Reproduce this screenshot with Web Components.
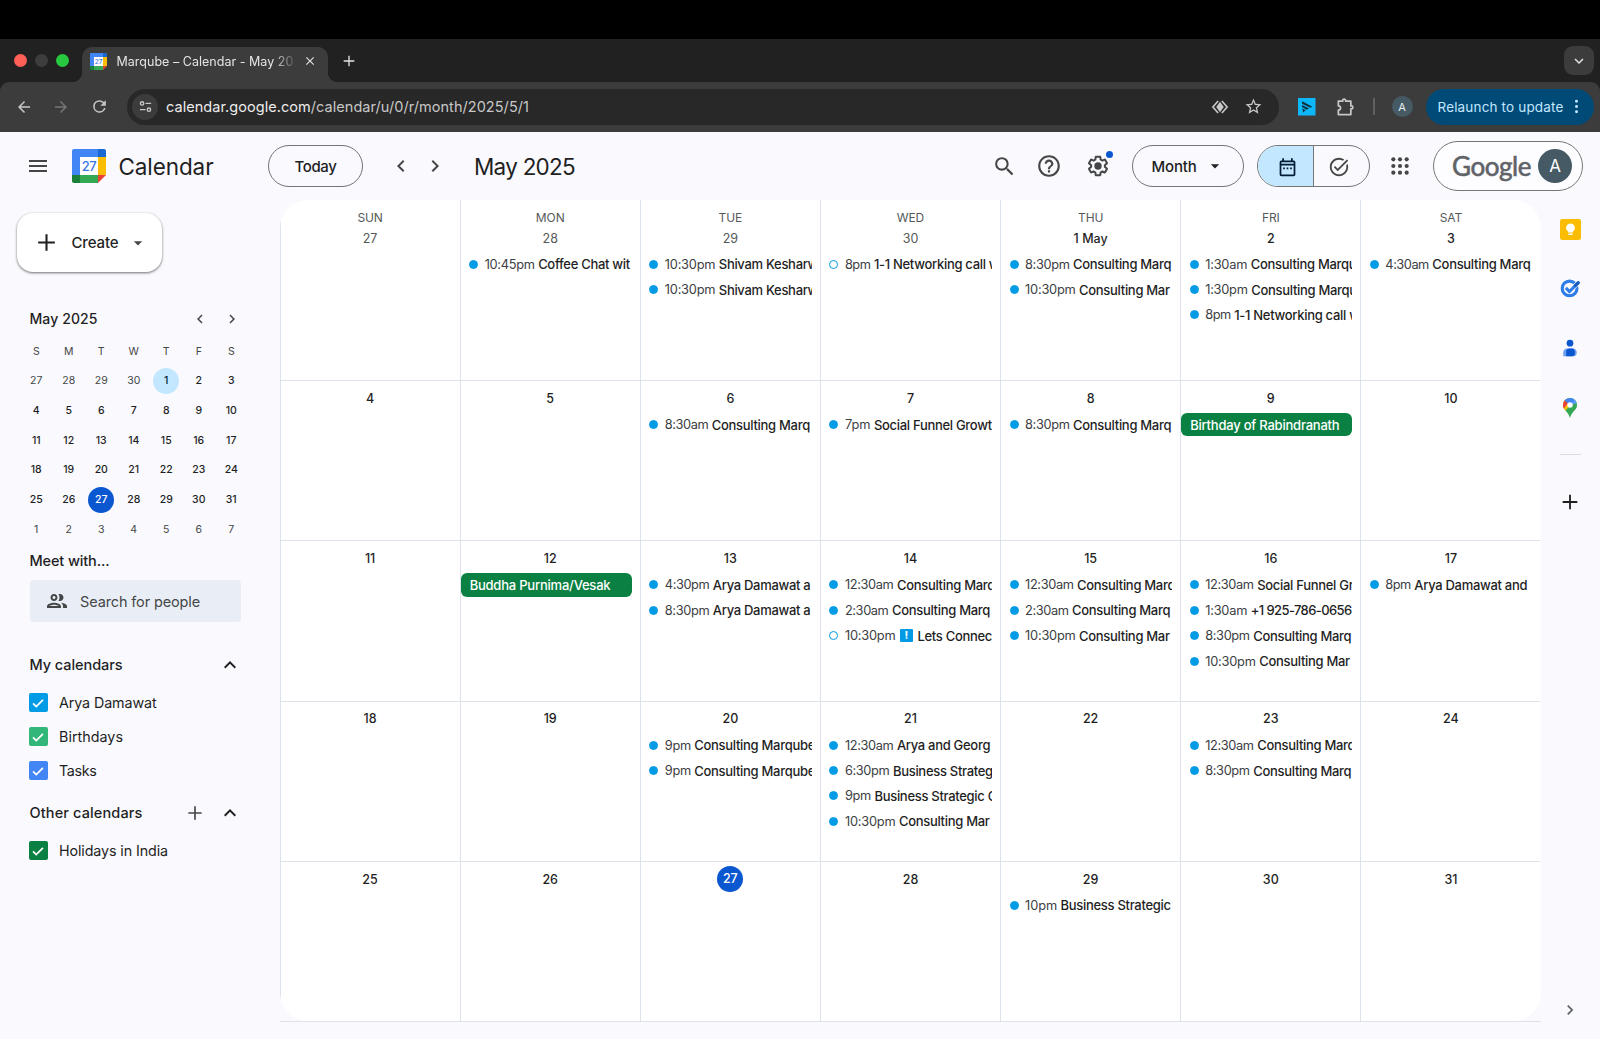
<!DOCTYPE html>
<html lang="en">
<head>
<meta charset="utf-8">
<title>Marqube – Calendar - May 2025</title>
<style>
   body {
      margin: 0;
      width: 1600px;
      height: 1039px;
      overflow: hidden;

      font-family: Inter, Roboto, "Noto Sans", sans-serif;
      color: #1f1f1f;
      background: #f9f9fe;
   }
</style>
</head>
<body>
<cal-window></cal-window>

<script>
// Icon shapes, drawn in a 24 unit box
const ICONS = {
   menu: `<path d="M3 18h18v-2H3v2zm0-5h18v-2H3v2zm0-7v2h18V6H3z"/>`,
   search: `<path d="M15.5 14h-.79l-.28-.27A6.471 6.471 0 0 0 16 9.5 6.5 6.5 0 1 0 9.5 16c1.61 0 3.09-.59 4.23-1.57l.27.28v.79l5 4.99L20.49 19l-4.99-5zm-6 0C7.01 14 5 11.99 5 9.5S7.01 5 9.5 5 14 7.01 14 9.5 11.99 14 9.5 14z"/>`,
   help: `<path d="M11 18h2v-2h-2v2zm1-16C6.48 2 2 6.48 2 12s4.48 10 10 10 10-4.48 10-10S17.52 2 12 2zm0 18c-4.41 0-8-3.59-8-8s3.59-8 8-8 8 3.59 8 8-3.59 8-8 8zm0-14c-2.21 0-4 1.79-4 4h2c0-1.1.9-2 2-2s2 .9 2 2c0 2-3 1.75-3 5h2c0-2.25 3-2.5 3-5 0-2.21-1.79-4-4-4z"/>`,
   gear: `<path d="M13.85 22.25h-3.7c-.74 0-1.36-.54-1.45-1.27l-.27-1.89c-.27-.14-.53-.29-.79-.46l-1.8.72c-.7.26-1.47-.03-1.81-.65L2.2 15.53c-.35-.66-.2-1.44.36-1.88l1.53-1.19c-.01-.15-.02-.3-.02-.46 0-.15.01-.31.02-.46l-1.52-1.19c-.59-.45-.74-1.26-.37-1.88l1.85-3.19c.34-.62 1.11-.9 1.79-.63l1.81.73c.26-.17.52-.32.78-.46l.27-1.91c.09-.7.71-1.25 1.44-1.25h3.7c.74 0 1.36.54 1.45 1.27l.27 1.89c.27.14.53.29.79.46l1.8-.72c.71-.26 1.48.03 1.82.65l1.84 3.18c.36.66.2 1.44-.36 1.88l-1.52 1.19c.01.15.02.3.02.46s-.01.31-.02.46l1.52 1.19c.56.45.72 1.23.37 1.86l-1.86 3.22c-.34.62-1.11.9-1.8.63l-1.8-.72c-.26.17-.52.32-.78.46l-.27 1.91c-.1.68-.72 1.22-1.46 1.22zm-3.23-2h2.76l.37-2.55.53-.22c.44-.18.88-.44 1.34-.78l.45-.34 2.38.96 1.38-2.4-2.03-1.58.07-.56c.03-.26.06-.51.06-.78s-.03-.53-.06-.78l-.07-.56 2.03-1.58-1.39-2.4-2.39.96-.45-.35c-.42-.32-.87-.58-1.33-.77l-.52-.22-.37-2.55h-2.76l-.37 2.55-.53.21c-.44.19-.88.44-1.34.79l-.45.33-2.38-.95-1.39 2.39 2.03 1.58-.07.56a7 7 0 0 0-.06.79c0 .26.02.53.06.78l.07.56-2.03 1.58 1.38 2.4 2.39-.96.45.35c.43.33.86.58 1.33.77l.53.22.38 2.55z"/><circle cx="12" cy="12" r="3.7"/>`,
   left: `<path d="M15.41 7.41 14 6l-6 6 6 6 1.41-1.41L10.83 12z"/>`,
   right: `<path d="M8.59 16.59 10 18l6-6-6-6-1.41 1.41L13.17 12z"/>`,
   up: `<path d="m12 8-6 6 1.41 1.41L12 10.83l4.59 4.58L18 14z"/>`,
   down: `<path d="M16.59 8.59 12 13.17 7.41 8.59 6 10l6 6 6-6z"/>`,
   caret: `<path d="m7 10 5 5 5-5z"/>`,
   plus: `<path d="M20 13h-7v7h-2v-7H4v-2h7V4h2v7h7v2z"/>`,
   close: `<path d="M19 6.41 17.59 5 12 10.59 6.41 5 5 6.41 10.59 12 5 17.59 6.41 19 12 13.41 17.59 19 19 17.59 13.41 12z"/>`,
   back: `<path d="M20 11H7.83l5.59-5.59L12 4l-8 8 8 8 1.41-1.41L7.83 13H20v-2z"/>`,
   forward: `<path d="m12 4-1.41 1.41L16.17 11H4v2h12.17l-5.58 5.59L12 20l8-8z"/>`,
   reload: `<path d="M17.65 6.35A7.96 7.96 0 0 0 12 4a8 8 0 1 0 7.73 10h-2.08A6 6 0 1 1 12 6c1.66 0 3.14.69 4.22 1.78L13 11h7V4z"/>`,
   tune: `<g fill="none" stroke="currentColor" stroke-width="2.2"><circle cx="6.5" cy="7" r="2.7"/><path d="M12 7h9M3 17h9"/><circle cx="17.5" cy="17" r="2.7"/></g>`,
   lens: `<path d="m12 5 5 7-5 7-5-7z"/><path d="M9.5 4 2.500 12l7 8M14.500 4l7 8-7 8" fill="none" stroke="currentColor" stroke-width="2.2"/>`,
   star: `<path d="m22 9.24-7.19-.62L12 2 9.19 8.63 2 9.24l5.46 4.73L5.82 21 12 17.27 18.18 21l-1.63-7.03L22 9.24zM12 15.4l-3.76 2.27 1-4.28-3.32-2.88 4.38-.38L12 6.1l1.71 4.04 4.38.38-3.32 2.88 1 4.28L12 15.4z"/>`,
   puzzle: `<path d="M4 5h5.2v-.6a1.8 1.8 0 0 1 3.6 0V5H19v5.7h.6a1.8 1.8 0 0 1 0 3.6H19V21H4v-5.2a2.6 2.6 0 0 0 0-5.2z" fill="none" stroke="currentColor" stroke-width="2.1" stroke-linejoin="round"/>`,
   dots: `<circle cx="12" cy="4.5" r="2.1"/><circle cx="12" cy="12" r="2.1"/><circle cx="12" cy="19.5" r="2.1"/>`,
   day: `<path fill-rule="evenodd" d="M6 1.5h2V4h8V1.5h2V4h1a2 2 0 0 1 2 2v14a2 2 0 0 1-2 2H5a2 2 0 0 1-2-2V6a2 2 0 0 1 2-2h1zM5 9.8V20h14V9.8zM5 6v1.8h14V6z"/><path d="M7 12h2v2H7zm4 0h2v2h-2zm4 0h2v2h-2z"/>`,
   done: `<path d="M22 5.18 10.59 16.6l-4.24-4.24 1.41-1.41 2.83 2.83 10-10L22 5.18zM19.79 10.22c.13.57.21 1.17.21 1.78 0 4.42-3.58 8-8 8s-8-3.58-8-8 3.58-8 8-8c1.58 0 3.04.46 4.28 1.25l1.44-1.44A9.9 9.9 0 0 0 12 2C6.48 2 2 6.48 2 12s4.48 10 10 10 10-4.48 10-10c0-1.19-.22-2.33-.6-3.39l-1.61 1.61z"/>`,
   apps: [4, 12, 20].map(y => [4, 12, 20].map(x => `<circle cx="${x}" cy="${y}" r="2.5"/>`).join("")).join(""),
   people: `<path d="M9 13.75c-2.34 0-7 1.17-7 3.5V19h14v-1.75c0-2.33-4.66-3.5-7-3.5zM4.34 17c.84-.58 2.87-1.25 4.66-1.25s3.82.67 4.66 1.25H4.34zM9 12c1.93 0 3.5-1.57 3.5-3.5S10.93 5 9 5 5.5 6.57 5.5 8.5 7.07 12 9 12zm0-5c.83 0 1.5.67 1.5 1.5S9.83 10 9 10s-1.5-.67-1.5-1.5S8.17 7 9 7zm7.04 6.81c1.16.84 1.96 1.96 1.96 3.44V19h4v-1.75c0-2.02-3.5-3.17-5.96-3.44zM15 12c1.93 0 3.5-1.57 3.5-3.5S16.93 5 15 5c-.54 0-1.04.13-1.5.35.63.89 1 1.98 1 3.15s-.37 2.26-1 3.15c.46.22.96.35 1.5.35z"/>`,
   check: `<path d="m3.5 12.5 5.5 5.5L20.5 6.5" fill="none" stroke="currentColor" stroke-width="3"/>`,
   extension: `<path fill="#0cb8f8" d="M0 0h24v24H0z"/><path d="m6 4.500 13.500 7.500L17 13.500 5.500 8zM5.500 9.500l9.500 5-3 1.500-6.500-3.500zM6 14.500l4.500 2.300-3.500 3z" fill="#12303c"/>`,
   keep: `<rect width="24" height="24" rx="2.5" fill="#fbbc04"/><path d="M12 5a5 5 0 0 0-2.8 9.1V15.5h5.6v-1.4A5 5 0 0 0 12 5zM9.6 16.6h4.8v1.8H9.6z" fill="#fff"/>`,
   tasks: `<circle cx="11.5" cy="12.5" r="8.8" fill="none" stroke="#2f7de9" stroke-width="3.8"/><path d="m15.500 12 7-7" stroke="#f9f9fe" stroke-width="5.5"/><path d="m7 11.800 4.300 4.400L22 5.500" fill="none" stroke="#2f7de9" stroke-width="3.6"/><path d="m18.5 9 3.5-3.5" stroke="#185abc" stroke-width="3.8" stroke-linecap="round"/>`,
   contacts: `<circle cx="12" cy="5.5" r="4.5" fill="#0b57d0"/><path d="M3 23v-5a5.5 5.5 0 0 1 5.5-5.5h7A5.5 5.5 0 0 1 21 18a5 5 0 0 1-5 5z" fill="#6f9df0"/><path d="M7 23v-6a4.5 4.5 0 0 1 4.5-4.5h4.2q2.8 1 2.8 4.5v1.5A4.5 4.5 0 0 1 14 23z" fill="#0b57d0"/>`,
   maps: `<clipPath id="pin"><path d="M12 0a8.5 8.5 0 0 0-8.5 8.5c0 6 6.3 7.5 8.5 15.5 2.2-8 8.5-9.5 8.5-15.5A8.5 8.5 0 0 0 12 0z"/></clipPath><g clip-path="url(#pin)"><path fill="#34a853" d="M0 0h24v24H0z"/><path fill="#fbbc04" d="M0 8 6 16l11-13-8-3z"/><path fill="#ea4335" d="M0 0v12l4 1 8-9z"/><path fill="#4285f4" d="m5 2 7 7 7-7-7-4z"/><path fill="#5a9af8" d="m12 8 7-7 3 5z"/></g><circle cx="12" cy="8.3" r="3.3" fill="#fff"/>`,
};

// One icon, coloured by the text colour around it
class GIcon extends HTMLElement {
   connectedCallback() {
      const size = this.getAttribute("size") || 24;

      this.attachShadow({ mode: "open" }).innerHTML = `
         <style>
            :host {
               display: block;
               flex: none;
               width: ${size}px;
               height: ${size}px;
            }

            svg {
               display: block;
               overflow: visible;
            }
         </style>
         <svg width="${size}" height="${size}" viewBox="0 0 24 24" fill="currentColor">${ICONS[this.getAttribute("name")]}</svg>
      `;
   }
}

// Calendar logo with the day number on it
class CalLogo extends HTMLElement {
   connectedCallback() {
      const size = this.getAttribute("size");

      this.attachShadow({ mode: "open" }).innerHTML = `
         <style>
            :host {
               display: block;
               flex: none;
               height: ${size}px;
            }

            svg {
               display: block;
            }
         </style>
         <svg width="${size}" height="${size}" viewBox="0 0 34 34">
            <path fill="#4285f4" d="M2 0h24v8H8v18H0V2a2 2 0 0 1 2-2z"/>
            <path fill="#1967d2" d="M26 0h6a2 2 0 0 1 2 2v6h-8z"/>
            <path fill="#fbbc04" d="M26 8h8v18h-8z"/>
            <path fill="#34a853" d="M8 26h18v8H8z"/>
            <path fill="#188038" d="M0 26h8v8H2a2 2 0 0 1-2-2z"/>
            <path fill="#ea4335" d="M26 26h8l-8 8z"/>
            <path fill="#fff" d="M8 8h18v18H8z"/>
            <text x="17" y="21.8" text-anchor="middle" font-family="Inter" font-size="13" font-weight="500" letter-spacing="-.4" fill="#3b78e7">27</text>
         </svg>
      `;
   }
}

// Label that spreads its letters over the width in "w"
class FitText extends HTMLElement {
   connectedCallback() {
      this.attachShadow({ mode: "open" }).innerHTML =
         `<style>:host { display: inline-block; flex: none; white-space: nowrap; }</style><slot></slot>`;

      const width = this.getBoundingClientRect().width;
      const target = Number(this.getAttribute("w"));

      this.style.letterSpacing = (target - width) / this.textContent.length + "px";
   }
}

// Browser tabs and address bar
class BrowserChrome extends HTMLElement {
   connectedCallback() {
      this.attachShadow({ mode: "open" }).innerHTML = `
         <style>
            :host {
               display: block;
               padding-top: 39px;
               background: #000;
               color: #e3e3e3;
            }

            .strip, .bar, .tab, .url, .relaunch {
               display: flex;
               align-items: center;
               box-sizing: border-box;
            }

            .strip {
               height: 43px;
               padding: 0 6px 0 13.5px;
               background: #202120;
            }

            .light {
               width: 13px;
               height: 13px;
               margin-right: 8.3px;
               border-radius: 50%;
            }

            .tab {
               position: relative;
               align-self: flex-end;
               width: 245.5px;
               height: 35px;
               margin-left: 5px;
               padding: 0 11px 7px 8px;
               border-radius: 10px 10px 0 0;
               background: #3c3c3c;
               font-size: 12.5px;
            }

            .tab::before, .tab::after {
               content: "";
               position: absolute;
               bottom: 0;
               width: 10px;
               height: 10px;
            }

            .tab::before {
               right: 100%;
               background: radial-gradient(circle at 0 0, #0000 10px, #3c3c3c 10.5px);
            }

            .tab::after {
               left: 100%;
               background: radial-gradient(circle at 100% 0, #0000 10px, #3c3c3c 10.5px);
            }

            .tab fit-text {
               margin: 0 10px 0 9px;
               -webkit-mask-image: linear-gradient(90deg, #000 88%, #0003);
               mask-image: linear-gradient(90deg, #000 88%, #0003);
            }

            .drop {
               display: grid;
               place-items: center;
               width: 30px;
               height: 29px;
               margin-left: auto;
               border-radius: 9px;
               background: #3c3c3c;
            }

            .under {
               background: #202120;
            }

            .bar {
               height: 50px;
               padding: 0 6px 1px 14.5px;
               box-sizing: border-box;
               border-radius: 9px 9px 0 0;
               background: #3c3c3c;
               color: #c7c7c7;
            }

            .url {
               width: 1152px;
               height: 36px;
               margin: 0 19px 0 18.5px;
               padding: 0 16px 0 5px;
               border-radius: 18px;
               background: #282828;
               font-size: 14.5px;
            }

            .tune {
               display: grid;
               place-items: center;
               width: 26px;
               height: 26px;
               margin-right: 8px;
               border-radius: 50%;
               background: #3c3c3c;
            }

            b {
               font-weight: 400;
               color: #ececec;
            }

            .avatar {
               display: grid;
               place-items: center;
               width: 21px;
               height: 21px;
               margin: 0 13px 0 17px;
               border-radius: 50%;
               background: #455a64;
               color: #e8eef0;
               font-size: 11px;
            }

            .relaunch {
               width: 168px;
               height: 36px;
               padding-left: 12px;
               border-radius: 18px;
               background: #004a77;
               color: #c2e7ff;
               font-size: 13.5px;
            }
         </style>
         <div class="strip">
            <div class="light" style="background:#fe5f57"></div>
            <div class="light" style="background:#3d3d3d"></div>
            <div class="light" style="background:#28c840"></div>
            <div class="tab">
               <cal-logo size="17"></cal-logo>
               <fit-text w="177">Marqube – Calendar - May 20</fit-text>
               <g-icon name="close" size="14"></g-icon>
            </div>
            <g-icon name="plus" size="16" style="margin-left:13px"></g-icon>
            <div class="drop"><g-icon name="down" size="18"></g-icon></div>
         </div>
         <div class="under">
            <div class="bar">
               <g-icon name="back" size="18"></g-icon>
               <g-icon name="forward" size="18" style="margin-left:19.5px;color:#757575"></g-icon>
               <g-icon name="reload" size="19" style="margin-left:19.5px"></g-icon>
               <div class="url">
                  <div class="tune"><g-icon name="tune" size="15"></g-icon></div>
                  <fit-text w="363"><b>calendar.google.com</b>/calendar/u/0/r/month/2025/5/1</fit-text>
                  <g-icon name="lens" size="18" style="margin-left:auto"></g-icon>
                  <g-icon name="star" size="19" style="margin-left:15px"></g-icon>
               </div>
               <g-icon name="extension" size="17.5"></g-icon>
               <g-icon name="puzzle" size="20" style="margin-left:19.5px"></g-icon>
               <div style="width:2px;height:17px;margin-left:17.5px;background:#606060"></div>
               <div class="avatar">A</div>
               <div class="relaunch">
                  <fit-text w="126">Relaunch to update</fit-text>
                  <g-icon name="dots" size="17" style="margin-left:4px"></g-icon>
               </div>
            </div>
         </div>
      `;
   }
}

// Page header
class CalHeader extends HTMLElement {
   connectedCallback() {
      this.attachShadow({ mode: "open" }).innerHTML = `
         <style>
            :host {
               display: flex;
               align-items: center;
               box-sizing: border-box;
               height: 68px;
               padding: 0 17.5px 0 26px;
               color: #444746;
            }

            .pill {
               display: flex;
               align-items: center;
               justify-content: center;
               box-sizing: border-box;
               height: 42px;
               border: 1px solid #747775;
               border-radius: 21px;
               color: #1f1f1f;
               font-size: 15px;
               font-weight: 500;
            }

            .title {
               color: #1f1f1f;
               font-size: 22.5px;
            }

            .gear {
               position: relative;
               margin: 0 22px 0 24px;
            }

            .gear::after {
               content: "";
               position: absolute;
               top: -3px;
               right: -3px;
               width: 7px;
               height: 7px;
               border-radius: 50%;
               background: #0b57d0;
            }

            .views {
               display: grid;
               grid-template-columns: 56px 1fr;
               width: 113.5px;
               margin: 0 20px 0 12.5px;
               overflow: hidden;
               justify-content: stretch;
            }

            .views > div {
               display: grid;
               place-items: center;
               box-sizing: border-box;
               height: 42px;
               padding-right: 4px;
               color: #444746;
            }

            .views > .on {
               padding: 0 0 0 4px;
               border-right: 1px solid #747775;
               background: #c2e7ff;
               color: #001d35;
            }

            .account {
               width: 150px;
               height: 50px;
               margin-left: 22.5px;
               padding-left: 9px;
               border-radius: 25px;
               background: #fdfdff;
            }

            .brand {
               color: #5f6368;
               font-family: Lato, sans-serif;
               font-size: 26px;
               font-weight: 400;
               -webkit-text-stroke: .6px #5f6368;
            }

            .avatar {
               display: grid;
               place-items: center;
               width: 34px;
               height: 34px;
               margin-left: 7px;
               border-radius: 50%;
               background: #455a64;
               color: #fff;
               font-size: 17px;
               font-weight: 400;
            }
         </style>
         <g-icon name="menu"></g-icon>
         <cal-logo size="34" style="margin-left:22px"></cal-logo>
         <fit-text class="title" w="95" style="margin-left:12.5px">Calendar</fit-text>
         <div class="pill" style="width:95px;margin-left:54.5px"><fit-text w="42">Today</fit-text></div>
         <g-icon name="left" style="margin-left:26px"></g-icon>
         <g-icon name="right" style="margin-left:10px"></g-icon>
         <fit-text class="title" w="101" style="margin-left:27px">May 2025</fit-text>
         <g-icon name="search" size="25" style="margin-left:auto"></g-icon>
         <g-icon name="help" size="26" style="margin-left:19.5px"></g-icon>
         <div class="gear"><g-icon name="gear"></g-icon></div>
         <div class="pill" style="width:112px">
            <fit-text w="45">Month</fit-text>
            <g-icon name="caret" size="20" style="margin-left:8px"></g-icon>
         </div>
         <div class="pill views">
            <div class="on"><g-icon name="day" size="21"></g-icon></div>
            <div><g-icon name="done" size="22"></g-icon></div>
         </div>
         <g-icon name="apps" size="20"></g-icon>
         <div class="pill account">
            <fit-text class="brand" w="79">Google</fit-text>
            <div class="avatar">A</div>
         </div>
      `;
   }
}

// Small month in the side bar
class MiniMonth extends HTMLElement {
   connectedCallback() {
      const days = [];

      for (let i = 0; i < 42; i++) {
         const day = i < 4 ? 27 + i : i < 35 ? i - 3 : i - 34;
         const kind = i < 4 || i > 34 ? "out" : day == 1 ? "picked" : day == 27 ? "today" : "";

         days.push(`<span class="${kind}">${day}</span>`);
      }

      this.attachShadow({ mode: "open" }).innerHTML = `
         <style>
            :host {
               display: block;
               width: 228px;
            }

            header {
               display: flex;
               align-items: center;
               height: 24px;
               padding-left: 9.5px;
               color: #444746;
            }

            header fit-text {
               margin-right: auto;
               color: #1f1f1f;
               font-size: 14px;
               font-weight: 500;
            }

            .grid {
               display: grid;
               grid-template-columns: repeat(7, 32.5px);
               grid-auto-rows: 29.65px;
               place-items: center;
               margin-top: 6.3px;
               font-size: 10.5px;
               font-weight: 500;
            }

            .grid span {
               width: 26px;
               line-height: 26px;
               border-radius: 50%;
               text-align: center;
            }

            .grid i, .grid .out {
               color: #444746;
               font-style: normal;
               font-weight: 400;
            }

            .grid .picked {
               background: #c2e7ff;
               color: #001d35;
            }

            .grid .today {
               background: #0b57d0;
               color: #fff;
            }
         </style>
         <header>
            <fit-text w="68">May 2025</fit-text>
            <g-icon name="left" size="18"></g-icon>
            <g-icon name="right" size="18" style="margin:0 7px 0 14px"></g-icon>
         </header>
         <div class="grid">${[..."SMTWTFS"].map(d => `<i>${d}</i>`).join("")}${days.join("")}</div>
      `;
   }
}

// Checkbox row in a calendar list
class CalCheck extends HTMLElement {
   connectedCallback() {
      this.attachShadow({ mode: "open" }).innerHTML = `
         <style>
            :host {
               display: flex;
               align-items: center;
               gap: 11px;
               height: 34px;
               font-size: 14.3px;
            }

            .box {
               display: grid;
               place-items: center;
               width: 19.5px;
               height: 19px;
               border-radius: 2px;
               background: ${this.getAttribute("color")};
               color: #fff;
            }
         </style>
         <div class="box"><g-icon name="check" size="14"></g-icon></div>
         <fit-text w="${this.getAttribute("w")}">${this.getAttribute("label")}</fit-text>
      `;
   }
}

class CalSide extends HTMLElement {
   connectedCallback() {
      this.attachShadow({ mode: "open" }).innerHTML = `
         <style>
            :host {
               display: block;
               flex: none;
               box-sizing: border-box;
               width: 279.5px;
               padding: 13px 0 0 20px;
            }

            .create {
               display: flex;
               align-items: center;
               box-sizing: border-box;
               width: 145px;
               height: 59px;
               margin: 0 0 34.7px -3.5px;
               padding-left: 17.5px;
               border-radius: 16px;
               background: #fff;
               box-shadow: 0 1px 3px #0006, 0 1px 2px #0003;
               font-size: 15px;
               font-weight: 500;
            }

            .head {
               display: flex;
               align-items: center;
               height: 24px;
               width: 212px;
               margin-left: 9.5px;
               font-size: 14.5px;
               font-weight: 500;
            }

            .find {
               display: flex;
               align-items: center;
               box-sizing: border-box;
               width: 211px;
               height: 42px;
               margin: 7.5px 0 30.5px 9.5px;
               padding-left: 15px;
               border-radius: 4px;
               background: #e9eef6;
               color: #444746;
               font-size: 14.5px;
            }

            cal-check {
               margin-left: 8.5px;
            }
         </style>
         <div class="create">
            <g-icon name="plus" size="25"></g-icon>
            <fit-text w="47" style="margin-left:12.5px">Create</fit-text>
            <g-icon name="caret" size="20" style="margin-left:9px;color:#444746"></g-icon>
         </div>
         <mini-month></mini-month>
         <div class="head" style="margin-top:4.3px"><fit-text w="80">Meet with...</fit-text></div>
         <div class="find">
            <g-icon name="people"></g-icon>
            <fit-text w="120" style="margin-left:11.5px">Search for people</fit-text>
         </div>
         <div class="head">
            <fit-text w="93">My calendars</fit-text>
            <g-icon name="up" style="margin-left:auto"></g-icon>
         </div>
         <div style="height:9px"></div>
         <cal-check label="Arya Damawat" w="97.5" color="#039be5"></cal-check>
         <cal-check label="Birthdays" w="64" color="#33b679"></cal-check>
         <cal-check label="Tasks" w="37.5" color="#4285f4"></cal-check>
         <div class="head" style="margin-top:13px">
            <fit-text w="113">Other calendars</fit-text>
            <g-icon name="plus" size="20" style="margin:0 12.5px 0 auto;color:#444746"></g-icon>
            <g-icon name="up"></g-icon>
         </div>
         <div style="height:9px"></div>
         <cal-check label="Holidays in India" w="109" color="#0b8043"></cal-check>
      `;
   }
}

// Width of the time column, by its text
const TIMES = {
   "10:45pm": 50, "10:30pm": 50.5, "12:30am": 48.5, "8:30pm": 44.5, "4:30pm": 44.5, "6:30pm": 44.5,
   "8:30am": 43.5, "4:30am": 43.5, "2:30am": 43.5, "1:30am": 42, "1:30pm": 42.5,
   "8pm": 25.5, "7pm": 25.5, "9pm": 26, "10pm": 32,
};

// Timed event: a dot, the time and the title. "allday" makes it a bar.
class CalEvent extends HTMLElement {
   connectedCallback() {
      const time = this.getAttribute("time");

      this.attachShadow({ mode: "open" }).innerHTML = `
         <style>
            :host {
               display: flex;
               align-items: center;
               box-sizing: border-box;
               width: 171px;
               height: 23.4px;
               padding-left: 8.5px;
               overflow: hidden;
               font-size: 13px;
               white-space: nowrap;
            }

            :host([allday]) {
               padding-left: 9px;
               border-radius: 6px;
               background: #0b8043;
               color: #fff;
               font-weight: 500;
               letter-spacing: -.22px;
            }

            .dot {
               flex: none;
               box-sizing: border-box;
               width: 9px;
               height: 9px;
               margin-right: 6.5px;
               border: 1.3px solid #039be5;
               border-radius: 50%;
               background: #039be5;
            }

            :host([open]) .dot {
               background: #fff;
            }

            fit-text {
               color: #3c4043;
               font-size: 12.8px;
            }

            .title {
               margin-left: 3.5px;
               font-weight: 500;
               letter-spacing: -.3px;
            }

            .mark {
               flex: none;
               width: 13px;
               height: 13px;
               margin: 0 1px 0 4.5px;
               border-radius: 1px;
               background: #039be5;
               color: #fff;
               font-size: 11px;
               font-weight: 700;
               line-height: 13px;
               text-align: center;
            }
         </style>
         ${time ? `<div class="dot"></div><fit-text w="${TIMES[time]}">${time}</fit-text>` : ""}
         ${this.hasAttribute("mark") ? `<div class="mark">!</div>` : ""}
         ${time ? `<div class="title"><slot></slot></div>` : `<slot></slot>`}
      `;
   }
}

// "o" before a time marks an event that is not accepted yet
const EVENTS = {
   1: [["10:45pm", "Coffee Chat wit"]],
   2: [["10:30pm", "Shivam Kesharw"], ["10:30pm", "Shivam Kesharw"]],
   3: [["o8pm", "1-1 Networking call w"]],
   4: [["8:30pm", "Consulting Marq"], ["10:30pm", "Consulting Mar"]],
   5: [["1:30am", "Consulting Marqu"], ["1:30pm", "Consulting Marqu"], ["8pm", "1-1 Networking call w"]],
   6: [["4:30am", "Consulting Marq"]],
   9: [["8:30am", "Consulting Marq"]],
   10: [["7pm", "Social Funnel Growt"]],
   11: [["8:30pm", "Consulting Marq"]],
   12: [["", "Birthday of Rabindranath"]],
   15: [["", "Buddha Purnima/Vesak"]],
   16: [["4:30pm", "Arya Damawat a"], ["8:30pm", "Arya Damawat a"]],
   17: [["12:30am", "Consulting Marq"], ["2:30am", "Consulting Marq"], ["o10:30pm", "!Lets Connec"]],
   18: [["12:30am", "Consulting Marq"], ["2:30am", "Consulting Marq"], ["10:30pm", "Consulting Mar"]],
   19: [["12:30am", "Social Funnel Gr"], ["1:30am", "+1 925-786-0656"], ["8:30pm", "Consulting Marq"], ["10:30pm", "Consulting Mar"]],
   20: [["8pm", "Arya Damawat and"]],
   23: [["9pm", "Consulting Marqube"], ["9pm", "Consulting Marqube"]],
   24: [["12:30am", "Arya and Georg"], ["6:30pm", "Business Strateg"], ["9pm", "Business Strategic C"], ["10:30pm", "Consulting Mar"]],
   26: [["12:30am", "Consulting Marq"], ["8:30pm", "Consulting Marq"]],
   32: [["10pm", "Business Strategic"]],
};

class CalMonth extends HTMLElement {
   connectedCallback() {
      const names = ["SUN", "MON", "TUE", "WED", "THU", "FRI", "SAT"];
      let cells = "";

      for (let i = 0; i < 35; i++) {
         const day = i < 4 ? 27 + i : i - 3;
         const events = (EVENTS[i] || []).map(([time, title]) => {
            if (!time)
               return `<cal-event allday>${title}</cal-event>`;

            const open = time[0] == "o" ? "open" : "";
            const mark = title[0] == "!" ? "mark" : "";

            // Phone numbers are set a little tighter than words
            if (title[0] == "+")
               title = `<span style="letter-spacing:-.6px">${title}</span>`;

            return `<cal-event time="${time.replace("o", "")}" ${open} ${mark}>${title.replace("!", "")}</cal-event>`;
         });

         cells += `
            <div class="cell">
               ${i < 7 ? `<div class="name">${names[i]}</div>` : ""}
               <div class="day ${i < 4 ? "out" : ""}"><span class="${i == 30 ? "today" : ""}">${i == 4 ? "1 May" : day}</span></div>
               <div class="events">${events.join("")}</div>
            </div>`;
      }

      this.attachShadow({ mode: "open" }).innerHTML = `
         <style>
            :host {
               display: block;
               flex: none;
               width: 1261px;
               height: 821px;
               border-bottom: 1px solid #dde3ea;
            }

            .grid {
               display: grid;
               grid-template-columns: repeat(7, 1fr);
               grid-template-rows: 180.3px repeat(4, 160.2px);
               border-radius: 28px;
               background: #fff;
               overflow: hidden;
            }

            .cell {
               min-width: 0;
               box-sizing: border-box;
               padding-top: 7.3px;
               border-left: 1px solid #dde3ea;
               border-top: 1px solid #dde3ea;
            }

            .cell:nth-child(-n + 7) {
               padding-top: 7px;
               border-top: none;
            }

            .name, .day {
               display: flex;
               align-items: center;
               justify-content: center;
               height: 20px;
               font-size: 12.5px;
               font-weight: 500;
            }

            .name {
               margin-bottom: 1px;
               font-size: 12px;
               letter-spacing: -.1px;
            }

            .name, .out {
               color: #565959;
               font-weight: 400;
            }

            .today {
               width: 26px;
               margin: -3px 0;
               border-radius: 50%;
               background: #0b57d0;
               color: #fff;
               line-height: 26px;
               text-align: center;
            }

            .events {
               display: grid;
               gap: 2px;
               margin-top: 4.5px;
            }
         </style>
         <div class="grid">${cells}</div>
      `;
   }
}

// Add-on icons on the right
class CalRail extends HTMLElement {
   connectedCallback() {
      this.attachShadow({ mode: "open" }).innerHTML = `
         <style>
            :host {
               display: flex;
               flex: 1;
               flex-direction: column;
               align-items: center;
               box-sizing: border-box;
               height: 839px;
               padding: 19px 0 19px;
            }

            hr {
               width: 21px;
               height: 1px;
               margin: 36px 0 35.5px;
               border: none;
               background: #dadce0;
            }
         </style>
         <g-icon name="keep" size="21"></g-icon>
         <g-icon name="tasks" size="20" style="margin-top:38px"></g-icon>
         <g-icon name="contacts" size="18" style="margin-top:41px"></g-icon>
         <g-icon name="maps" size="20" style="margin-top:41px"></g-icon>
         <hr>
         <g-icon name="plus" size="22"></g-icon>
         <g-icon name="right" size="20" style="margin-top:auto;color:#5f6368"></g-icon>
      `;
   }
}

class CalWindow extends HTMLElement {
   connectedCallback() {
      this.attachShadow({ mode: "open" }).innerHTML = `
         <style>
            :host {
               display: block;
            }

            main {
               display: flex;
               align-items: flex-start;
            }
         </style>
         <browser-chrome></browser-chrome>
         <cal-header></cal-header>
         <main>
            <cal-side></cal-side>
            <cal-month></cal-month>
            <cal-rail></cal-rail>
         </main>
      `;
   }
}

customElements.define("g-icon", GIcon);
customElements.define("cal-logo", CalLogo);
customElements.define("fit-text", FitText);
customElements.define("browser-chrome", BrowserChrome);
customElements.define("cal-header", CalHeader);
customElements.define("mini-month", MiniMonth);
customElements.define("cal-check", CalCheck);
customElements.define("cal-side", CalSide);
customElements.define("cal-event", CalEvent);
customElements.define("cal-month", CalMonth);
customElements.define("cal-rail", CalRail);
customElements.define("cal-window", CalWindow);
</script>
</body>
</html>
